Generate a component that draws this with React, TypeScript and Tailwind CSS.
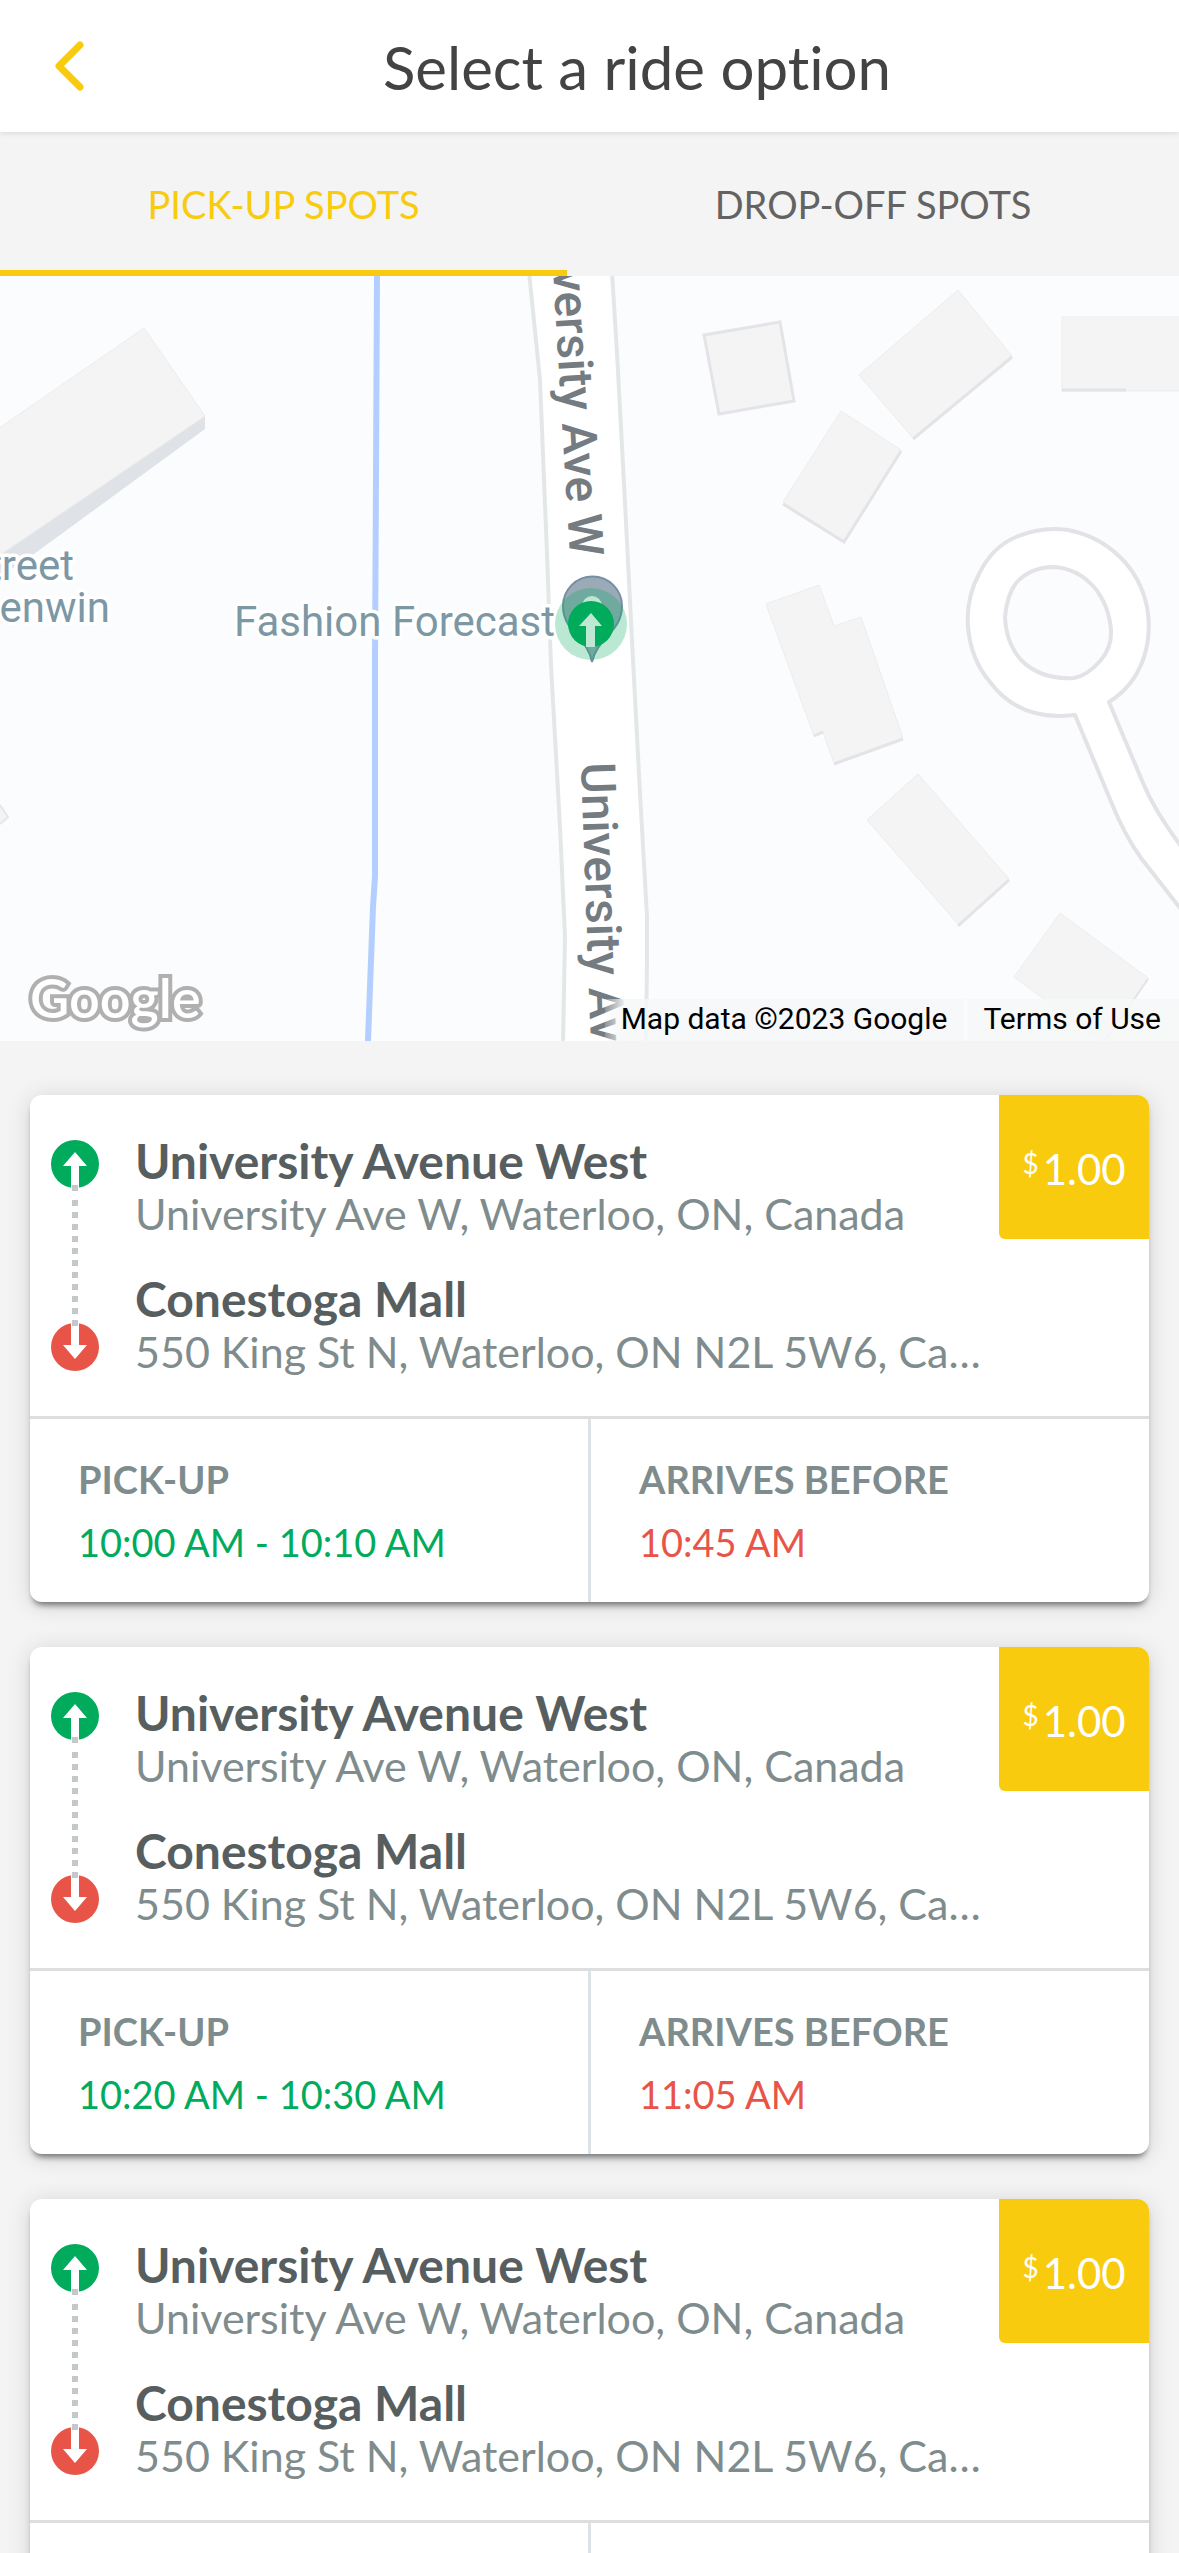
import { useState } from "react";

const rides = [
  { id: 1, pickup: "10:00 AM - 10:10 AM", arrives: "10:45 AM" },
  { id: 2, pickup: "10:20 AM - 10:30 AM", arrives: "11:05 AM" },
  { id: 3, pickup: "10:40 AM - 10:50 AM", arrives: "11:25 AM" },
];

const stops = [
  { name: "University Avenue West", address: "University Ave W, Waterloo, ON, Canada" },
  { name: "Conestoga Mall", address: "550 King St N, Waterloo, ON N2L 5W6, Canada" },
];

const tabs = ["PICK-UP SPOTS", "DROP-OFF SPOTS"];

const dots = [45, 60, 72, 84, 96, 108, 120, 132, 144, 156, 168, 180];

function Header() {
  return (
    <header className="relative z-10 flex h-[132px] shrink-0 items-center bg-white shadow-[0_1px_6px_rgba(0,0,0,0.12)]">
      <button type="button" aria-label="Back" className="flex h-full w-[95px] shrink-0 items-center pl-[52px]">
        <svg width="34" height="52" viewBox="0 0 34 52" fill="none">
          <path d="M28 5 L7 26 L28 47" stroke="#f8cb0e" strokeWidth="7" strokeLinecap="round" strokeLinejoin="round" />
        </svg>
      </button>
      <h1 className="flex-1 pt-0.5 text-center text-[60px] leading-[72px] text-[#434343]">Select a ride option</h1>
    </header>
  );
}

function Tabs() {
  const [active, setActive] = useState(0);

  return (
    <div role="tablist" className="flex h-36 shrink-0">
      {tabs.map((t, i) => (
        <button
          key={t}
          type="button"
          role="tab"
          aria-selected={i === active}
          onClick={() => setActive(i)}
          className={
            i === active
              ? "relative flex-auto text-[38px] leading-[48px] text-[#f8cb0e]"
              : "relative flex-auto text-[38px] leading-[48px] text-[#636363]"
          }
        >
          {t}
          {i === active && <span className="absolute inset-x-0 bottom-0 h-[6px] bg-[#f8cb0e]" />}
        </button>
      ))}
    </div>
  );
}

function Map() {
  return (
    <section aria-label="Map" className="relative shrink-0 overflow-hidden bg-[#fbfcfe]">
      <svg viewBox="0 0 1179 765" className="block h-auto w-full font-[Roboto,sans-serif]">
        {/* buildings */}
        <path d="M205 140 V153 L23 286 L0 300 V277 Z" fill="#dfe2e7" />
        <path d="M-5 155 L144 52 L205 140 L0 279 Z" fill="#f4f4f4" stroke="#ececec" />
        <path d="M0 529 L8 541 L0 548" fill="#f4f4f4" stroke="#e6e6e8" strokeWidth="2" />
        <path d="M704 59 L780 46 L794 125 L719 138 Z" fill="#f4f4f4" stroke="#e4e4e8" strokeWidth="3" />
        <g fill="#f4f4f4" stroke="#ededee" strokeWidth="1">
          <path d="M958 14 L1012 80 L913 162 L859 99 Z" />
          <path d="M841 135 L901 174 L844 265 L783 226 Z" />
          <path d="M1062 41 H1180 V115 H1062 Z" />
          <path d="M766 328 L819 309 L834 350 L861 341 L903 462 L834 487 L823 456 L814 460 Z" />
          <path d="M918 498 L1009 603 L958 648 L867 544 Z" />
          <path d="M1060 637 L1148 702 L1103 767 L1014 701 Z" />
        </g>
        <g fill="none" stroke="#e4e4e8" strokeWidth="3">
          <path d="M1012 81 L913 163" />
          <path d="M901 175 L844 266 L783 228" />
          <path d="M1062 114 H1126" />
          <path d="M903 463 L834 488" />
          <path d="M823 456 L814 460" />
          <path d="M1009 604 L958 650" />
          <path d="M1148 703 L1103 768" strokeWidth="2" />
        </g>

        {/* roads */}
        <path d="M377 0 L376 200 L375 384 L375 600 L373 631 L368 765" fill="none" stroke="#b3cfff" strokeWidth="6" />
        <path
          d="M529 -4 L540 104 L547 277 L551 389 L560 551 L565 661 L563 769 H646 L647 684 L647 641 L640 517 L633 384 L625 227 L617 77 L612 -4 Z"
          fill="#fff"
          stroke="#e4e7e8"
          strokeWidth="4"
        />
        <path
          d="M1109 426 Q1133 411 1143 384 Q1152 358 1147 331 Q1141 302 1121 282 Q1099 260 1068 254 Q1042 250 1016 261 Q992 271 979 298 Q966 322 968 351 Q971 384 990 406 Q1016 441 1062 440 L1075 439 L1112 528 Q1124 558 1141 582 L1190 645 V582 Q1157 540 1143 507 Z"
          fill="#fff"
          stroke="#e3e3e7"
          strokeWidth="4"
          strokeLinejoin="round"
        />
        <path
          d="M1005 341 Q1007 319 1016 307 Q1031 291 1053 291 Q1077 292 1094 311 Q1109 329 1111 354 Q1112 371 1101 384 Q1087 400 1074 402 Q1041 404 1021 384 Q1006 367 1005 341 Z"
          fill="#fbfcfe"
          stroke="#e3e3e7"
          strokeWidth="4"
        />

        {/* labels */}
        <g fill="#747c81" fontSize="48" fontWeight="500">
          <text transform="translate(570 281) rotate(86.6)" textAnchor="end">
            University Ave W
          </text>
          <text transform="translate(581 487) rotate(88)">University Ave W</text>
        </g>
        <g fill="#7c98a5" stroke="#fff" strokeWidth="7" strokeLinejoin="round" fontSize="42" className="[paint-order:stroke]">
          <text x="74" y="304" textAnchor="end">Street</text>
          <text x="110" y="346" textAnchor="end">Glenwin</text>
          <text x="555" y="360" textAnchor="end">Fashion Forecast</text>
        </g>

        {/* place pin with the pick-up marker over it */}
        <path
          d="M592 386 C588 362 563 356 563 330 A29 29 0 0 1 622 330 C622 356 597 362 592 386 Z"
          fill="#9aabb7"
          stroke="#7490a2"
          strokeWidth="2"
        />
        <circle cx="592" cy="330" r="10" fill="#fff" />
        <circle cx="591" cy="348" r="36" fill="#00ab5c" fillOpacity="0.27" />
        <circle cx="591" cy="348" r="23" fill="#00ab5c" />
        <path d="M591 337 L602 350 H595 V371 H586 V350 H579 Z" fill="#bce8d4" />

        <text
          x="30"
          y="742"
          fontSize="54"
          fontWeight="600"
          fill="#fff"
          stroke="#b0b0b0"
          strokeWidth="8"
          className="font-[Lato,sans-serif] [paint-order:stroke]"
        >
          Google
        </text>
      </svg>

      <div className="absolute right-0 bottom-0 flex h-[42px] font-[Roboto,sans-serif] text-[30px] leading-[40px] text-black">
        <span className="mr-[3px] bg-linear-to-r from-[#f6f7f7]/20 to-[#f6f7f7]/85 to-5% pr-[17px] pl-4">
          Map data ©2023 Google
        </span>
        <a href="#terms" className="bg-[#f6f7f7]/85 pr-[18px] pl-4">
          Terms of Use
        </a>
      </div>
    </section>
  );
}

function RouteLine() {
  return (
    <svg width="50" height="232" viewBox="0 0 50 232" className="mt-[45px] shrink-0" aria-hidden="true">
      <circle cx="25" cy="24" r="24" fill="#00ab5c" />
      <path d="M25 12 L37 26 H29 V49 H21 V26 H13 Z" fill="#fff" />
      <circle cx="25" cy="207" r="24" fill="#e85548" />
      <path d="M25 219 L37 205 H29 V182 H21 V205 H13 Z" fill="#fff" />
      {dots.map((y) => (
        <rect key={y} x="22" y={y} width="6" height="6" fill="#c5c8c9" />
      ))}
    </svg>
  );
}

function RideCard({ pickup, arrives }: { pickup: string; arrives: string }) {
  return (
    <li className="overflow-hidden rounded-xl bg-white shadow-[0_6px_6px_-3px_rgba(0,0,0,0.5),0_3px_24px_rgba(0,0,0,0.14)]">
      <div className="flex items-start pl-5">
        <RouteLine />
        <div className="flex min-w-0 flex-1 flex-col gap-8 pt-[37px] pr-2 pb-10 pl-[35px]">
          {stops.map((s) => (
            <div key={s.name}>
              <h2 className="truncate text-[48px] leading-[58px] font-bold text-[#575e60]">{s.name}</h2>
              <p className="truncate text-[43px] leading-[48px] text-[#7f8c8d]">{s.address}</p>
            </div>
          ))}
        </div>
        <div className="flex h-36 w-[150px] shrink-0 items-start justify-center gap-1 rounded-bl-md bg-[#f8cb0e] pt-[50px] text-white">
          <span className="text-[28px] leading-[36px]">$</span>
          <span className="text-[42px] leading-[48px]">1.00</span>
        </div>
      </div>

      <dl className="flex border-t-[3px] border-[#dedede] text-[38px] leading-[48px]">
        <div className="flex flex-1 flex-col gap-[15px] px-12 py-9">
          <dt className="font-bold text-[#7f8c8d]">PICK-UP</dt>
          <dd className="text-[#00ab5c]">{pickup}</dd>
        </div>
        <div className="flex flex-1 flex-col gap-[15px] border-l-[3px] border-[#dbe3e6] px-12 py-9">
          <dt className="font-bold text-[#7f8c8d]">ARRIVES BEFORE</dt>
          <dd className="text-[#e85548]">{arrives}</dd>
        </div>
      </dl>
    </li>
  );
}

export default function App() {
  return (
    <div className="flex h-screen flex-col overflow-hidden bg-[#f4f4f4] font-[Lato,sans-serif] [font-variant-ligatures:no-common-ligatures]">
      <Header />
      <Tabs />
      <Map />
      <ul className="flex min-h-0 flex-1 flex-col gap-[45px] overflow-y-auto px-[30px] pt-[54px] pb-[45px] [scrollbar-width:none] *:shrink-0">
        {rides.map((r) => (
          <RideCard key={r.id} pickup={r.pickup} arrives={r.arrives} />
        ))}
      </ul>
    </div>
  );
}
